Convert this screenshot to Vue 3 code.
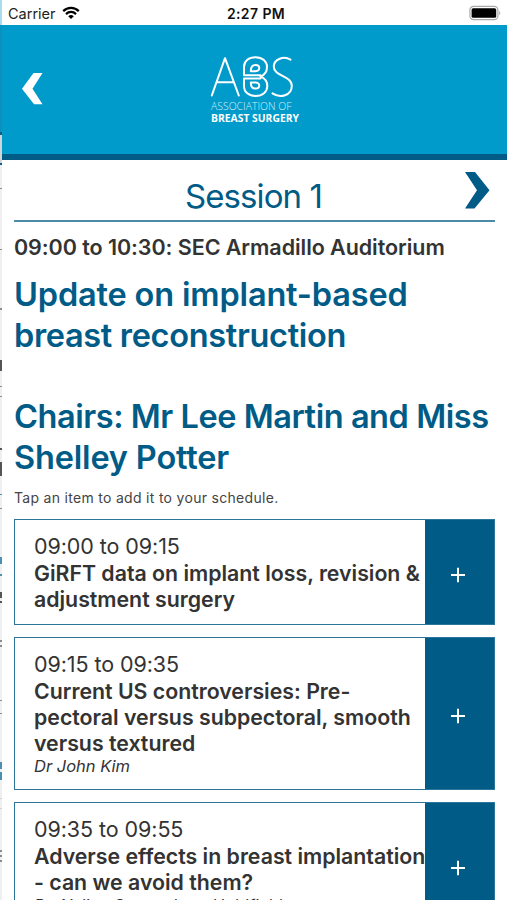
<script setup>
const items = [
  { time: '09:00 to 09:15', lines: ['GiRFT data on implant loss, revision &', 'adjustment surgery'], speaker: '' },
  { time: '09:15 to 09:35', lines: ['Current US controversies: Pre-', 'pectoral versus subpectoral, smooth', 'versus textured'], speaker: 'Dr John Kim' },
  { time: '09:35 to 09:55', lines: ['Adverse effects in breast implantation', '- can we avoid them?'], speaker: 'Dr Aisling Somershan, Holdfield' },
]
const slivers = [
  [132, 3, 'navy'], [135, 28, 'pale'], [163, 2, 'navy'], [188, 1, 'grey'], [249, 1, 'grey'], [308, 2, 'grey'],
  [360, 11, 'dark'], [386, 1, 'grey'], [396, 1, 'grey'], [448, 2, 'dark'], [462, 14, 'dark'], [494, 1, 'teal'], [508, 1, 'grey'],
  [557, 7, 'teal'], [574, 2, 'teal'], [592, 6, 'dark'], [601, 2, 'dark'], [640, 2, 'grey'], [645, 2, 'grey'], [700, 1, 'grey'], [713, 1, 'grey'],
  [762, 7, 'teal'], [772, 8, 'teal'], [798, 1, 'pale'], [808, 1, 'pale'], [850, 2, 'grey'], [855, 2, 'grey'], [860, 2, 'grey'],
]
</script>

<template>
  <div class="screen">
    <svg class="edge" width="2" height="900" aria-hidden="true">
      <rect width="2" height="25" fill="#a9dcee" />
      <rect y="25" width="2" height="110" fill="#0c91bd" />
      <rect v-for="s in slivers" :key="s[0]" :y="s[0]" width="2" :height="s[1]" :class="s[2]" />
    </svg>
    <div class="page">
      <div class="status">
        <div class="carrier">
          <span>Carrier</span>
          <svg width="18" height="14" viewBox="0 0 18 14">
            <g fill="none" stroke="#000" stroke-width="2.2">
              <path d="M1.2 5.1C5.5.8 12.5.8 16.8 5.1" />
              <path d="M4 8.1C6.9 5.2 11.1 5.2 14 8.1" />
            </g>
            <path d="M6.2 10.2Q9 7.7 11.8 10.2L9 13Z" />
          </svg>
        </div>
        <span class="clock">2:27 PM</span>
        <svg class="battery" width="33" height="16" viewBox="0 0 33 16">
          <rect x=".9" y="1.4" width="28" height="13.2" rx="3.6" fill="#fff" stroke="#aaa" stroke-width="1.2" />
          <rect x="2.6" y="3.2" width="24.6" height="9.6" rx="1.6" />
          <path d="M30.2 5.7Q32.4 8 30.2 10.3Z" fill="#aaa" />
        </svg>
      </div>
      <header class="header">
        <svg class="back" width="22" height="32" viewBox="0 0 22 32"><path d="M11.5 0H20.5L10.5 15.7L20.5 31.3H12L0 15.7Z" fill="#fff" /></svg>
        <svg class="logo" width="92" height="70" viewBox="0 0 92 70">
          <g fill="none" stroke="#fff" stroke-width="2" stroke-linecap="round" stroke-linejoin="round">
            <path d="M1.8 40.5L15 3.2L28.8 40.5M7 27.3H24" />
            <path d="M34 20.3V12C34 6 39 2.2 45.5 2.2C52.5 2.2 57 6.5 57 12C57 16.5 54.5 20 50.5 21.6C54.5 23 57.3 26.5 57.3 31C57.3 37 52.5 41 45.5 41C39 41 34 37.2 34 31V23.4M34 20.3H50.5M34 23.4H50.5" />
            <path d="M40.8 16.2C40.8 12 42.5 10 45.5 10C50.5 10 50.5 16.2 45.5 16.2ZM40.8 27.4C40.8 31.6 42.5 33.6 45.5 33.6C50.5 33.6 50.5 27.4 45.5 27.4Z" />
            <path d="M80.5 4.6C74 .8 63.8 3.8 63.8 11.8C63.8 21.5 81.8 20.5 81.8 31C81.8 40.5 70 43.6 62.5 38.4" />
          </g>
          <text x="1" y="55.4" class="assoc" textLength="80.5" lengthAdjust="spacingAndGlyphs">ASSOCIATION OF</text>
          <text x="1" y="67" class="surgery" textLength="88" lengthAdjust="spacingAndGlyphs">BREAST SURGERY</text>
        </svg>
      </header>
      <main>
        <div class="session">
          <h1>Session 1</h1>
          <svg class="next" width="26" height="38" viewBox="0 0 26 38"><path d="M0 0H10L24.5 18.3L9.5 36.6H0L12 18.3Z" fill="#005b86" /></svg>
        </div>
        <p class="when">09:00 to 10:30: SEC Armadillo Auditorium</p>
        <h2><span class="t1">Update on implant-based</span><br><span class="t2">breast reconstruction</span><br><br><span class="t3">Chairs: Mr Lee Martin and Miss</span><br><span class="t4">Shelley Potter</span></h2>
        <p class="hint">Tap an item to add it to your schedule.</p>
        <article v-for="item in items" :key="item.time" class="item">
          <div class="body">
            <div class="time">{{ item.time }}</div>
            <div v-for="line in item.lines" :key="line" class="title">{{ line }}</div>
            <div v-if="item.speaker" class="speaker">{{ item.speaker }}</div>
          </div>
          <div class="add"><svg width="14" height="16" viewBox="0 0 14 16"><path d="M0 8H14M7 .7V15.3" stroke="#fff" stroke-width="2" /></svg></div>
        </article>
      </main>
    </div>
  </div>
</template>

<style>
body { margin: 0; overflow: hidden; background: #fff; }
</style>
<style scoped>
* { box-sizing: border-box; }
.screen { display: flex; width: 507px; height: 900px; overflow: hidden; font-family: Inter, "Liberation Sans", sans-serif; color: #333; background: #fff; }
.edge { flex: none; background: #efeff1; }
.navy { fill: #125f86; } .pale { fill: #cfd6d9; } .grey { fill: #8c8c8e; } .dark { fill: #555; } .teal { fill: #4b91af; }
.page { flex: 1; min-width: 0; }
.status { height: 25px; display: grid; grid-template-columns: 1fr auto 1fr; align-items: center; padding: 2px 5px 0 6px; }
.carrier { display: flex; align-items: center; gap: 6px; font-size: 14.5px; line-height: 23px; color: #222; }
.carrier svg { margin-bottom: 2px; }
.clock { font-size: 14px; line-height: 23px; font-weight: 600; letter-spacing: .4px; color: #111; padding-left: 2px; }
.battery { justify-self: end; margin-bottom: 1px; }
.header { height: 135px; display: grid; grid-template-columns: 1fr 92px 1fr; align-items: start; background: #009bcb; border-bottom: 6px solid #005b86; }
.back { margin: 48px 0 0 20px; }
.logo { margin: 30px 0 0 1px; }
.assoc { font: 300 10.6px "Open Sans", sans-serif; fill: #d4effa; }
.surgery { font: 700 10.4px "Open Sans", sans-serif; fill: #fff; }
main { padding: 0 12px; }
.session { height: 62px; display: grid; grid-template-columns: 28px 1fr 30px; border-bottom: 2px solid #4c8ba8; }
h1 { grid-column: 2; margin: 15px 0 0; text-align: center; font-size: 33px; line-height: 42px; font-weight: 400; letter-spacing: -.9px; color: #005b86; white-space: nowrap; }
.next { margin: 12px 0 0; }
.when { margin: 12px 0 0; font-size: 21.5px; line-height: 26px; font-weight: 600; letter-spacing: -.06px; white-space: nowrap; }
h2 { margin: 15px 0 0; font-size: 32.5px; line-height: 40.7px; font-weight: 600; color: #005b86; white-space: nowrap; }
.t1 { letter-spacing: -.16px; } .t2 { letter-spacing: -.33px; } .t3 { letter-spacing: -.44px; } .t4 { letter-spacing: -.17px; }
.hint { margin: 9.5px 0 0; font-size: 14px; line-height: 20px; letter-spacing: .3px; color: #444; }
.item { display: flex; margin-top: 12px; border: 1px solid #2b749a; }
.hint + .item { margin-top: 11px; }
.body { flex: 1; min-width: 0; padding: 13px 0 12px 19px; white-space: nowrap; }
.time { font-size: 21.5px; line-height: 27px; letter-spacing: -.08px; }
.title { font-size: 21.3px; line-height: 26px; font-weight: 600; }
.speaker { font-size: 16.5px; line-height: 21px; font-style: italic; }
.add { width: 69px; display: flex; justify-content: center; align-items: center; background: #005b86; padding: 5px 3px 0 0; }
</style>
